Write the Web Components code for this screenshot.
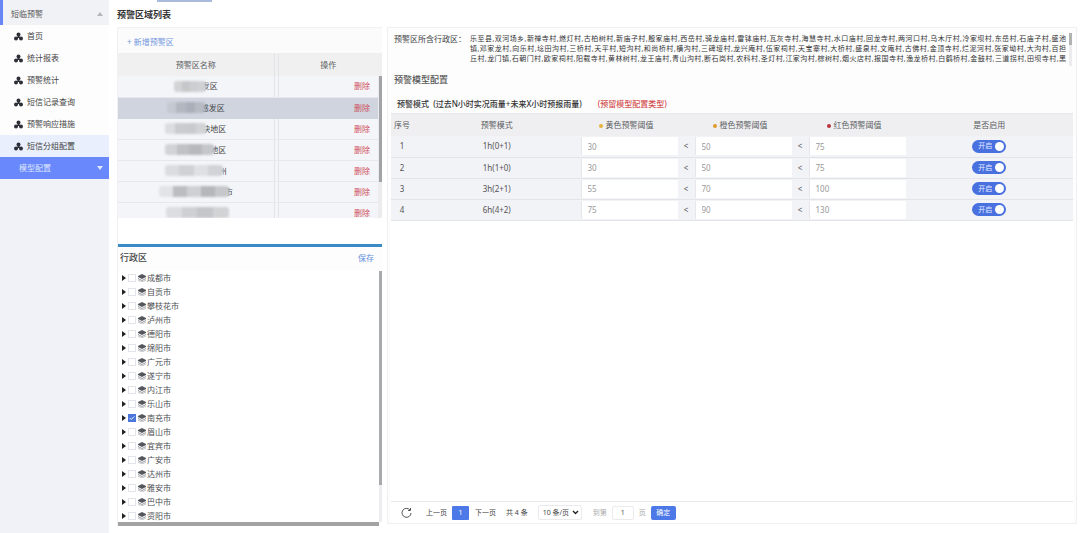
<!DOCTYPE html>
<html lang="zh-CN">
<head>
<meta charset="utf-8">
<title>预警区域列表</title>
<style>
html,body{margin:0}
body{font:8px/12px "Noto Sans","Noto Sans CJK SC",sans-serif;color:#444;background:#fff}
</style>
</head>
<body>
<warning-app></warning-app>
<script>
const base = `<style>
*{box-sizing:border-box}
button,input,select{font:inherit;color:inherit;margin:0;padding:0;border:0;background:none}
a{color:inherit;text-decoration:none}
h2,p,ul{margin:0;padding:0;list-style:none}
table{border-collapse:collapse;border-spacing:0;width:100%;table-layout:fixed}
th,td{padding:0;font-weight:400;text-align:center}
</style>`;
function define(name, render) {
  customElements.define(name, class extends HTMLElement {
    connectedCallback() {
      if (this.shadowRoot) return;
      this.attachShadow({mode: 'open'}).innerHTML = base + render(this);
    }
  });
}

define('nav-item', () => `<style>
:host{display:block}
a{display:flex;align-items:center;height:22px;padding-left:14px;gap:4px;background:#fdfdfe}
:host([selected]) a{background:#e9effc}
svg{width:9px;height:9px;fill:#2d3038}
</style><a href="#"><svg viewBox="0 0 18 18"><path d="M9 7v5M5 13l4-4 4 4" fill="none" stroke="#2d3038" stroke-width="3"/><circle cx="9" cy="5" r="4"/><circle cx="4" cy="13" r="4"/><circle cx="14" cy="13" r="4"/></svg><slot></slot></a>`);

define('side-nav', () => `<style>
:host{display:block;background:#f0f2f7}
button{display:flex;align-items:center;justify-content:space-between;width:100%;text-align:left}
svg{width:6px;height:4px;fill:currentColor}
.top{height:25px;padding:3px 6px 0 8px;border-left:3px solid #6687f3;background:#f1f2f6;color:#555}
.top svg{color:#b4b6bd}
.group{height:22px;padding:0 6px 0 19px;background:#6988fb;color:#dfe6ff}
</style><nav>
<button class="top" aria-expanded="true">短临预警<svg viewBox="0 0 6 4"><path d="M0 4L3 0 6 4z"/></svg></button>
<nav-item>首页</nav-item><nav-item>统计报表</nav-item><nav-item>预警统计</nav-item><nav-item>短信记录查询</nav-item><nav-item>预警响应措施</nav-item><nav-item selected>短信分组配置</nav-item>
<button class="group">模型配置<svg viewBox="0 0 6 4"><path d="M0 0h6L3 4z"/></svg></button>
</nav>`);

const areas = [
  ['发区', 32, '#d2d3d5,#c6c7c9,#cdced0,#d0d1d3'],
  ['感发区', 38, '#c5c9d1,#b3b7c0,#abafb9,#b7bbc4'],
  ['块地区', 41, '#dcdde0,#cbccce,#c9cacc,#d2d3d5'],
  ['地区', 49, '#d2d3d6,#c0c1c4,#b8b9bc,#c6c7ca'],
  ['州', 58, '#dbdce0,#d0d1d4,#dfe0e4,#d2d3d6'],
  ['市', 70, '#e2e3e7,#bcbdc0,#cfd0d4,#b6b7ba,#c6c7ca'],
  ['', 63, '#dcdde0,#cfd0d3,#c5c6c9,#d2d3d5']
];
define('area-table', () => `<style>
:host{display:grid;grid-template-columns:1fr 4px;grid-template-rows:22px 142px;border-top:1px solid #eee}
.head{grid-column:1/3;background:#f0f0f1;color:#5b5d62;padding-right:4px}
.head th{height:22px}
.body{overflow:hidden}
th:first-child,td:first-child{width:60%;border-right:1px solid #e3e4e7}
tr>:nth-child(2){width:4px;border-right:1px solid #e3e4e7}
td{height:21px;background:#f4f5f8;border-bottom:1px solid #e7e8eb}
tr.on td{background:#cfd4df;border-color:#cfd4df}
.name{display:flex;justify-content:center;align-items:center;height:20px}
.mask{height:11px;border-radius:3px;filter:blur(1px);position:relative}
.txt{margin-left:-4px}
td:last-child{text-align:right;padding-right:8px;color:#d0505c}
.bar{background:#ececee}
.thumb{height:106px;width:3px;background:#a2a3a6;margin-left:1px}
</style>
<div class="head"><table><thead><tr><th scope="col">预警区名称</th><th></th><th scope="col">操作</th></tr></thead></table></div>
<div class="body"><table aria-label="预警区"><tbody>${areas.map((a, i) => {
  const c = a[2].split(','), n = c.length;
  const stops = c.map((k, j) => `${k} ${j * 100 / n}% ${(j + 1) * 100 / n}%`).join(',');
  return `<tr class="${i === 1 ? 'on' : ''}"><td><div class="name"><span class="mask" style="width:${a[1]}px;background:linear-gradient(90deg,${stops})"></span><span class="txt">${a[0]}</span></div></td><td></td><td><button>删除</button></td></tr>`;
}).join('')}</tbody></table></div>
<div class="bar"><div class="thumb"></div></div>`);

define('tree-row', el => `<style>
:host{display:block}
label{display:flex;align-items:center;height:14px;color:#4c4e52}
.arrow{width:4px;height:6px;margin-right:2px;fill:#222}
input{appearance:none;width:8px;height:8px;margin-right:2px;border:1px solid #e3e5ea;background:#fff center/6px 6px no-repeat}
input:checked{border-color:#4c76dc;background-color:#4c76dc;background-image:url("data:image/svg+xml,%3Csvg xmlns='http://www.w3.org/2000/svg' viewBox='0 0 8 8'%3E%3Cpath d='M1 4l2 2 4-4' fill='none' stroke='white' stroke-width='1.200'/%3E%3C/svg%3E")}
.icon{width:8px;height:8px;margin-right:1px}
</style><label><svg class="arrow" viewBox="0 0 4 6"><path d="M0 0L4 3 0 6z"/></svg><input type="checkbox" ${el.hasAttribute('checked') ? 'checked' : ''}><svg class="icon" viewBox="0 0 16 16"><path d="M8 0l8 4v2l-8 4-8-4V4z" fill="#54575c"/><path d="M0 9l8 4 8-4" fill="none" stroke="#999ca1" stroke-width="2"/><path d="M0 12l8 4 8-4" fill="none" stroke="#c0c2c6" stroke-width="2"/></svg><slot></slot></label>`);

const cities = '成都市 自贡市 攀枝花市 泸州市 德阳市 绵阳市 广元市 遂宁市 内江市 乐山市 南充市 眉山市 宜宾市 广安市 达州市 雅安市 巴中市 资阳市'.split(' ');
define('region-tree', () => `<style>
:host{display:flex;flex-direction:column;border-top:3px solid #3a8ac6}
header{display:flex;justify-content:space-between;align-items:center;height:24px;padding:0 8px 2px 2px;background:#fdfdfe}
h2{font-size:9px;font-weight:500;color:#444}
button{color:#5f8ddb}
.view{display:grid;grid-template-columns:1fr 3px;max-height:251px;overflow:hidden}
.list{padding:0 0 0 4px}
.v{background:#ededef}.v i{display:block;height:85%;background:#a9aaac}
.h{height:4px;margin-right:3px;background:#a3a3a3}
</style><header><h2>行政区</h2><button>保存</button></header>
<div class="view"><div class="list">${cities.map(c => `<tree-row ${c === '南充市' ? 'checked' : ''}>${c}</tree-row>`).join('')}</div><div class="v"><i></i></div></div><div class="h"></div>`);

define('area-panel', () => `<style>
:host{display:flex;flex-direction:column;border:1px solid #f1f1f2;border-width:1px 0 0 1px;background:#fff}
.tools{height:25px;display:flex;align-items:center;padding:3px 0 0 9px;background:#fbfbfc;color:#7296dc}
.gap{height:26px}
</style><div class="tools"><button>+ 新增预警区</button></div><area-table></area-table><div class="gap"></div><region-tree></region-tree>`);

define('toggle-switch', () => `<style>
:host{display:inline-block;vertical-align:middle}
label{display:flex;align-items:center;justify-content:space-between;width:34px;height:13px;padding:0 2px 0 6px;border-radius:7px;background:#4870df;color:#e6edff;font-size:7px}
input{appearance:none;width:9px;height:9px;border-radius:50%;background:#fff}
</style><label><slot></slot><input type="checkbox" role="switch" checked></label>`);

const modes = [['1h(0+1)', 30, 50, 75], ['1h(1+0)', 30, 50, 75], ['3h(2+1)', 55, 70, 100], ['6h(4+2)', 75, 90, 130]];
const levels = ['黄色预警阈值', '橙色预警阈值', '红色预警阈值'];
define('model-table', () => `<style>
:host{display:block;border-top:1px solid #e6e7e9}
thead th,thead td{height:22px;background:#efeff1;color:#5b5d62;white-space:nowrap;border:0}
th.level{padding-right:6px}
i{display:inline-block;width:4px;height:4px;margin-right:3px;border-radius:50%;vertical-align:middle;background:#e5b13a}
.l1 i{background:#df9a2c}.l2 i{background:#b8323c}
td{height:21px;background:#f2f3f7;border-bottom:1px solid #e2e4e8;color:#555}
td input{display:block;width:100%;height:18px;padding-left:6px;border-left:1px solid #e6e7eb;background:#fff;color:#999}
</style><table><colgroup><col style="width:22px"><col><col style="width:97px"><col style="width:17px"><col style="width:97px"><col style="width:17px"><col style="width:97px"><col></colgroup>
<thead><tr><th scope="col">序号</th><th scope="col">预警模式</th>${levels.map((l, i) => `<th scope="col" class="level l${i}"><i></i>${l}</th>${i < 2 ? '<td></td>' : ''}`).join('')}<th scope="col">是否启用</th></tr></thead>
<tbody>${modes.map((m, r) => `<tr><td>${r + 1}</td><td>${m[0]}</td>${levels.map((l, i) => `<td><input type="text" value="${m[i + 1]}" aria-label="${l}"></td>${i < 2 ? '<td>&lt;</td>' : ''}`).join('')}<td><toggle-switch>开启</toggle-switch></td></tr>`).join('')}</tbody></table>`);

define('page-bar', () => `<style>
:host{display:flex;align-items:center;height:22px;padding-left:10px;border-top:1px solid #e8e9eb;color:#444;font-size:7px}
:host>*{flex:none}
.re{display:flex;width:11px;height:11px;margin-right:14px}
.re svg{width:11px;height:11px}
.now{width:17px;height:14px;margin:0 6px 0 5px;background:#4d78e8;color:#fff;border-radius:1px}
.total{margin:0 10px}
.size{display:flex;position:relative;margin-right:11px}
select{appearance:none;width:44px;height:15px;padding-left:4px;border:1px solid #ebebed;border-radius:2px;font-size:7px}
.size svg{position:absolute;right:3px;top:5px;width:7px;height:5px;pointer-events:none}
.jump{display:flex;align-items:center;gap:5px;color:#aaa}
.jump input{width:22px;height:14px;border:1px solid #ebebed;border-radius:2px;text-align:center;color:#555}
.ok{width:25px;height:14px;margin-left:5px;border-radius:2px;background:#4d78e8;color:#fff}
</style>
<button class="re" aria-label="刷新"><svg viewBox="0 0 22 22" fill="none" stroke="#555" stroke-width="2"><path d="M18 6a9 9 0 1 0 2 6M19 2v5h-5"/></svg></button>
<button>上一页</button><button class="now">1</button><button>下一页</button><span class="total">共 4 条</span>
<span class="size"><select aria-label="每页条数"><option>10 条/页</option></select><svg viewBox="0 0 7 5"><path d="M1 1l2.500 2.500L6 1" fill="none" stroke="#222" stroke-width="1.400"/></svg></span>
<label class="jump">到第<input type="text" value="1">页</label><button class="ok">确定</button>`);

define('config-panel', () => `<style>
:host{display:flex;flex-direction:column;border:1px solid #f0f0f2;background:#fdfdfe}
.regions{display:grid;grid-template-columns:76px 1fr 3px;height:38px;margin:5px 4px 0 6px;color:#444}
.regions p{font-size:7px;line-height:10px;padding-top:1px;text-align:justify;text-align-last:justify;white-space:nowrap;margin-right:3px;color:#333}
.regions b{font-weight:400}
.bar{background:#ececee;height:33px}.bar i{display:block;height:12px;background:#b1b2b4}
h2{font-size:9px;line-height:12px;font-weight:500;color:#555;margin:3px 6px 0}
.mode{display:flex;gap:16px;margin:12px 9px 3px;color:#333;font-weight:500}
.mode span{color:#d4504e}
.mode p{white-space:pre}
model-table,page-bar{margin:0 3px}
.fill{flex:1;background:#fff;margin:0 3px}
page-bar{background:#fff}
</style>
<div class="regions"><b>预警区所含行政区：</b><p>乐至县,双河场乡,新禅寺村,燃灯村,古柏树村,新庙子村,殷家庙村,西岳村,骑龙庙村,雷钵庙村,瓦灰寺村,海慧寺村,水口庙村,回龙寺村,两河口村,乌木厅村,冷家坝村,东岳村,石庙子村,盛池<br>镇,邓家龙村,向乐村,埝田沟村,三桥村,天平村,短沟村,和尚桥村,横沟村,三碑垭村,龙兴庵村,伍家祠村,天宝寨村,大桥村,盛泉村,文庵村,古佛村,金顶寺村,烂泥河村,张家坳村,大沟村,百担<br>丘村,龙门镇,石朝门村,欧家祠村,阳载寺村,黄林树村,龙王庙村,青山沟村,断石岗村,农科村,圣灯村,江家沟村,棕树村,烟火店村,报国寺村,渔龙桥村,白鹤桥村,金鼓村,三道拐村,田坝寺村,黑</p><div class="bar"><i></i></div></div>
<h2>预警模型配置</h2>
<div class="mode"><p>预警模式  (过去N小时实况雨量+未来X小时预报雨量)</p><span>(预留模型配置类型)</span></div>
<model-table></model-table><div class="fill"></div><page-bar></page-bar>`);

define('warning-app', () => `<style>
:host{display:grid;grid-template-columns:109px minmax(0,1fr);min-height:100vh}
main{display:flex;flex-direction:column;padding:0 3px 7px 8px}
.tab{width:55px;height:2px;margin-left:40px;background:#a9bbdc}
h1{margin:0;height:25px;line-height:25px;font-size:9px;font-weight:700;color:#333}
.cols{flex:1;display:grid;grid-template-columns:minmax(200px,265px) minmax(0,1fr);gap:5px}
config-panel{margin-bottom:2px}
</style><side-nav></side-nav><main><div class="tab"></div><h1>预警区域列表</h1><div class="cols"><area-panel></area-panel><config-panel></config-panel></div></main>`);
</script>
</body>
</html>
